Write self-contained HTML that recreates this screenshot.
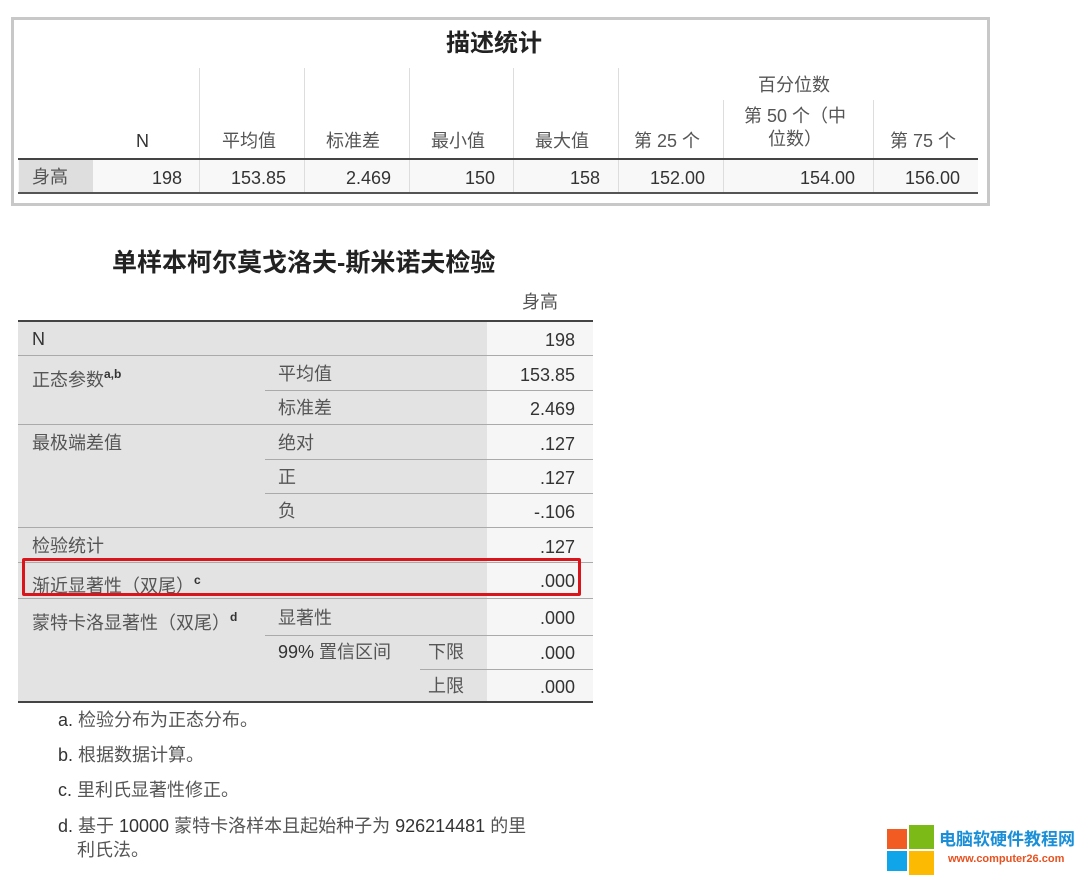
<!DOCTYPE html>
<html><head><meta charset="utf-8"><style>
body{margin:0;width:1090px;height:881px;background:#fff;position:relative;overflow:hidden;font-family:"Liberation Sans","Noto Sans CJK SC",sans-serif;color:#333}
.a{position:absolute}
.t{position:absolute;font-size:18px;line-height:20px;white-space:nowrap}
.g{color:#555}
.r{text-align:right}
.h{position:absolute;height:1px;background:#aaa}
.v{position:absolute;width:1px;background:#ddd}
sup{font-size:12px;font-weight:bold;color:#333;vertical-align:8px}
</style></head><body>
<!-- top table -->
<div class="a" style="left:11px;top:17px;width:973px;height:183px;border:3px solid #c8c8c8"></div>
<div class="t" style="left:446px;top:32px;font-size:24px;line-height:24px;font-weight:bold;color:#222">描述统计</div>
<div class="v" style="left:199px;top:68px;height:124px"></div>
<div class="v" style="left:304px;top:68px;height:124px"></div>
<div class="v" style="left:409px;top:68px;height:124px"></div>
<div class="v" style="left:513px;top:68px;height:124px"></div>
<div class="v" style="left:618px;top:68px;height:124px"></div>
<div class="v" style="left:723px;top:100px;height:92px"></div>
<div class="v" style="left:873px;top:100px;height:92px"></div>
<div class="t g" style="left:758px;top:75px">百分位数</div>
<div class="t" style="left:136px;top:131px">N</div>
<div class="t g" style="left:222px;top:131px">平均值</div>
<div class="t g" style="left:326px;top:131px">标准差</div>
<div class="t g" style="left:431px;top:131px">最小值</div>
<div class="t g" style="left:535px;top:131px">最大值</div>
<div class="t g" style="left:634px;top:131px">第 25 个</div>
<div class="t g" style="left:744px;top:106px">第 50 个（中</div>
<div class="t g" style="left:768px;top:129px">位数）</div>
<div class="t g" style="left:890px;top:131px">第 75 个</div>
<div class="a" style="left:18px;top:158px;width:960px;height:2px;background:#444"></div>
<div class="a" style="left:18px;top:160px;width:960px;height:32px;background:#f8f8f8"></div>
<div class="a" style="left:19px;top:160px;width:74px;height:32px;background:#dedede"></div>
<div class="v" style="left:199px;top:160px;height:32px"></div><div class="v" style="left:304px;top:160px;height:32px"></div><div class="v" style="left:409px;top:160px;height:32px"></div><div class="v" style="left:513px;top:160px;height:32px"></div><div class="v" style="left:618px;top:160px;height:32px"></div><div class="v" style="left:723px;top:160px;height:32px"></div><div class="v" style="left:873px;top:160px;height:32px"></div>
<div class="t g" style="left:32px;top:167px">身高</div>
<div class="t r" style="right:908px;top:168px">198</div>
<div class="t r" style="right:804px;top:168px">153.85</div>
<div class="t r" style="right:699px;top:168px">2.469</div>
<div class="t r" style="right:595px;top:168px">150</div>
<div class="t r" style="right:490px;top:168px">158</div>
<div class="t r" style="right:385px;top:168px">152.00</div>
<div class="t r" style="right:235px;top:168px">154.00</div>
<div class="t r" style="right:130px;top:168px">156.00</div>
<div class="a" style="left:18px;top:192px;width:960px;height:2px;background:#555"></div>

<!-- KS table -->
<div class="t" style="left:112px;top:250px;font-size:25px;line-height:26px;font-weight:bold;color:#222">单样本柯尔莫戈洛夫-斯米诺夫检验</div>
<div class="t g" style="left:522px;top:292px">身高</div>
<div class="a" style="left:18px;top:320px;width:575px;height:2px;background:#444"></div>
<div class="a" style="left:18px;top:322px;width:469px;height:379px;background:#e3e3e3"></div>
<div class="a" style="left:487px;top:322px;width:106px;height:379px;background:#f6f6f6"></div>
<div class="h" style="left:18px;top:355px;width:575px"></div>
<div class="h" style="left:265px;top:390px;width:328px"></div>
<div class="h" style="left:18px;top:424px;width:575px"></div>
<div class="h" style="left:265px;top:459px;width:328px"></div>
<div class="h" style="left:265px;top:493px;width:328px"></div>
<div class="h" style="left:18px;top:527px;width:575px"></div>
<div class="h" style="left:18px;top:562px;width:575px"></div>
<div class="h" style="left:18px;top:598px;width:575px"></div>
<div class="h" style="left:265px;top:635px;width:328px"></div>
<div class="h" style="left:420px;top:669px;width:173px"></div>
<div class="a" style="left:18px;top:701px;width:575px;height:2px;background:#444"></div>
<div class="t" style="left:32px;top:329px">N</div>
<div class="t g" style="left:32px;top:364px">正态参数<sup>a,b</sup></div>
<div class="t g" style="left:278px;top:364px">平均值</div>
<div class="t g" style="left:278px;top:398px">标准差</div>
<div class="t g" style="left:32px;top:433px">最极端差值</div>
<div class="t g" style="left:278px;top:433px">绝对</div>
<div class="t g" style="left:278px;top:467px">正</div>
<div class="t g" style="left:278px;top:501px">负</div>
<div class="t g" style="left:32px;top:536px">检验统计</div>
<div class="t g" style="left:32px;top:570px">渐近显著性（双尾）<sup>c</sup></div>
<div class="t g" style="left:32px;top:607px">蒙特卡洛显著性（双尾）<sup>d</sup></div>
<div class="t g" style="left:278px;top:608px">显著性</div>
<div class="t g" style="left:278px;top:642px"><span style="color:#333">99%</span> 置信区间</div>
<div class="t g" style="left:428px;top:642px">下限</div>
<div class="t g" style="left:428px;top:676px">上限</div>
<div class="t r" style="right:515px;top:330px">198</div>
<div class="t r" style="right:515px;top:365px">153.85</div>
<div class="t r" style="right:515px;top:399px">2.469</div>
<div class="t r" style="right:515px;top:434px">.127</div>
<div class="t r" style="right:515px;top:468px">.127</div>
<div class="t r" style="right:515px;top:502px">-.106</div>
<div class="t r" style="right:515px;top:537px">.127</div>
<div class="t r" style="right:515px;top:571px">.000</div>
<div class="t r" style="right:515px;top:608px">.000</div>
<div class="t r" style="right:515px;top:643px">.000</div>
<div class="t r" style="right:515px;top:677px">.000</div>
<div class="a" style="left:22px;top:558px;width:553px;height:32px;border:3px solid #d9141b;border-radius:2px"></div>

<div class="t" style="left:58px;top:710px">a. <span class="g">检验分布为正态分布。</span></div>
<div class="t" style="left:58px;top:745px">b. <span class="g">根据数据计算。</span></div>
<div class="t" style="left:58px;top:780px">c. <span class="g">里利氏显著性修正。</span></div>
<div class="t" style="left:58px;top:816px">d. <span class="g">基于</span> 10000 <span class="g">蒙特卡洛样本且起始种子为</span> 926214481 <span class="g">的里</span></div>
<div class="t g" style="left:77px;top:840px">利氏法。</div>

<!-- logo -->
<div class="a" style="left:887px;top:829px;width:20px;height:20px;background:#f25c22"></div>
<div class="a" style="left:909px;top:825px;width:25px;height:24px;background:#7cba17"></div>
<div class="a" style="left:887px;top:851px;width:20px;height:20px;background:#10a5e8"></div>
<div class="a" style="left:909px;top:851px;width:25px;height:24px;background:#fcba02"></div>
<div class="t" style="left:939px;top:830px;font-size:17px;font-weight:bold;color:#1a8fd8">电脑软硬件教程网</div>
<div class="t" style="left:948px;top:852px;font-size:11px;line-height:14px;font-weight:bold;color:#e8511f">www.computer26.com</div>
</body></html>
